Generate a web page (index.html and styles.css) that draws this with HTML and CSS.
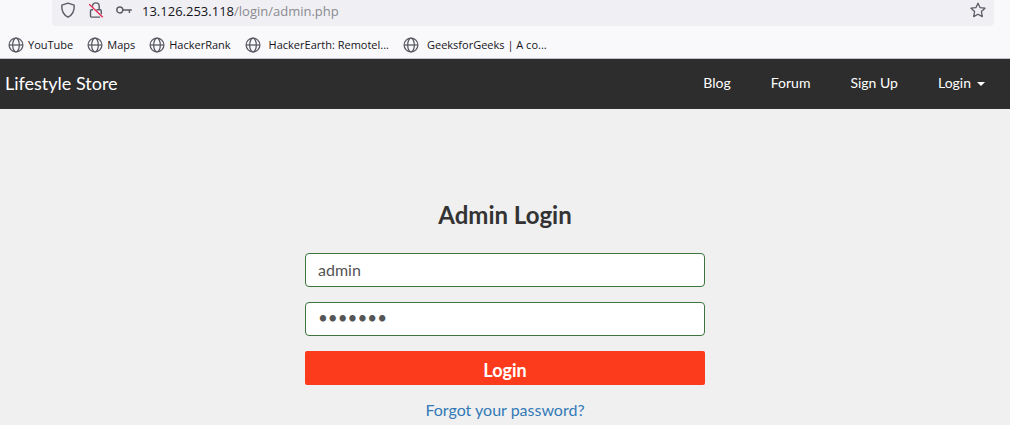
FILE: index.html
```html
<!DOCTYPE html>
<html lang="en">
<head>
<meta charset="utf-8">
<title>Lifestyle Store</title>
<link rel="stylesheet" href="styles.css">
</head>
<body>
<svg class="defs" aria-hidden="true">
  <symbol id="globe" viewBox="0 0 16 16">
    <g fill="none" stroke="#5b5b66" stroke-width="1.3">
      <circle cx="8" cy="8" r="6.9"/>
      <ellipse cx="8" cy="8" rx="3.3" ry="6.9"/>
      <path d="M1.2 8h13.6"/>
    </g>
  </symbol>
</svg>
<div class="browser">
  <div class="address">
    <svg class="icon" viewBox="0 0 16 16" aria-hidden="true"><path d="M8 1.2 14.2 3.2C14.6 9 12.5 12.8 8 15.2 3.5 12.8 1.4 9 1.8 3.2Z" fill="none" stroke="#5b5b66" stroke-width="1.4" stroke-linejoin="round"/></svg>
    <svg class="icon" viewBox="0 0 16 16" aria-hidden="true"><g fill="none" stroke="#5b5b66" stroke-width="1.4"><path d="M4.6 4.6V4.2a3.3 3.3 0 0 1 6.6 0V7.6"/><path d="M5 7.7H3.7a1.2 1.2 0 0 0-1.2 1.2v5a1.2 1.2 0 0 0 1.2 1.2h8.4M8.4 7.7h3.7a1.2 1.2 0 0 1 1.2 1.2v3.4"/></g><path d="M1.2 2.2 14.8 15.2" stroke="#e22850" stroke-width="1.3"/></svg>
    <svg class="icon" viewBox="0 0 16 16" aria-hidden="true"><g fill="none" stroke="#5b5b66" stroke-width="1.4"><circle cx="3.8" cy="8" r="3"/><path d="M6.8 8h9M13.4 8v3"/></g></svg>
    <div class="url" role="textbox" aria-label="Address" contenteditable="true" spellcheck="false"><span class="host">13.126.253.118</span>/login/admin.php</div>
    <button class="star" type="button" aria-label="Bookmark this page"><svg class="icon" viewBox="0 0 16 16" aria-hidden="true"><path d="M8 1.2 10 5.6 15 6.2 11.4 9.5 12.3 14.6 8 12.2 3.7 14.6 4.6 9.5 1 6.2 6 5.6Z" fill="none" stroke="#5b5b66" stroke-width="1.3" stroke-linejoin="round"/></svg></button>
  </div>
  <nav class="bookmarks" aria-label="Bookmarks">
    <a href="#"><svg class="icon" aria-hidden="true"><use href="#globe"/></svg>YouTube</a>
    <a href="#"><svg class="icon" aria-hidden="true"><use href="#globe"/></svg>Maps</a>
    <a href="#"><svg class="icon" aria-hidden="true"><use href="#globe"/></svg>HackerRank</a>
    <a href="#" class="wide"><svg class="icon" aria-hidden="true"><use href="#globe"/></svg>HackerEarth: Remotel...</a>
    <a href="#" class="wide"><svg class="icon" aria-hidden="true"><use href="#globe"/></svg>GeeksforGeeks | A co...</a>
  </nav>
</div>
<header class="navbar">
  <a class="brand" href="#">Lifestyle Store</a>
  <nav class="menu">
    <a href="#">Blog</a>
    <a href="#">Forum</a>
    <a href="#">Sign Up</a>
    <a href="#" class="dropdown">Login<span class="caret"></span></a>
  </nav>
</header>
<main class="login">
  <h1>Admin Login</h1>
  <form class="form">
    <input type="text" value="admin" aria-label="Username">
    <input class="password" type="password" value="adminpw" aria-label="Password">
    <button class="submit" type="submit">Login</button>
    <a class="forgot" href="#">Forgot your password?</a>
  </form>
</main>
</body>
</html>
```
FILE: styles.css
```css
* { box-sizing: border-box; }
body {
  margin: 0;
  background: #f0f0f0;
  color: #333;
  font-family: Lato, sans-serif;
}
a { color: inherit; text-decoration: none; }
.defs { position: absolute; width: 0; height: 0; }
.icon { display: block; width: 16px; height: 16px; flex: none; }

.browser {
  background: #f9f9fb;
  border-bottom: 1px solid #c2c2c8;
  font-family: "Open Sans", "Noto Sans", sans-serif;
}
.address {
  display: flex;
  align-items: center;
  gap: 12px;
  height: 26px;
  margin: 0 16px 0 52px;
  padding: 0 8px 6px;
  border-radius: 0 0 4px 4px;
  background: #f0f0f4;
}
.url { flex: 1; margin-left: -2px; padding-top: 2px; color: #8a8a90; font-size: 13px; line-height: 20px; outline: 0; }
.host { color: #15141a; }
.star { padding: 0; border: 0; background: none; }
.bookmarks {
  display: flex;
  gap: 14px;
  padding: 9px 8px 3px;
  color: #15141a;
  font-size: 11px;
  line-height: 20px;
  white-space: nowrap;
}
.bookmarks a { display: flex; align-items: center; gap: 4px; }
.bookmarks .wide { gap: 8px; }

.navbar {
  display: flex;
  align-items: center;
  justify-content: space-between;
  padding: 0 25px 2px 5px;
  background: #2d2d2d;
  color: #fff;
  line-height: 48px;
}
.brand { font-size: 18px; }
.menu { display: flex; gap: 40px; font-size: 14px; }
.dropdown { display: flex; align-items: center; gap: 6px; }
.caret { margin-top: 2px; border: 4px solid transparent; border-top-color: #fff; border-bottom: 0; }

.login {
  max-width: 400px;
  margin: 0 auto;
  padding-top: 91px;
  text-align: center;
}
h1 { margin: 0 0 23px; font-size: 24px; font-weight: 700; line-height: 30px; }
.form { display: flex; flex-direction: column; gap: 15px; }
.form input {
  width: 100%;
  height: 34px;
  padding: 0 12px 2px;
  border: 1px solid #3c763d;
  border-radius: 4px;
  background: #fff;
  color: #555;
  font: 16px Lato, sans-serif;
}
.form .password { padding-bottom: 4px; font-size: 17px; }
.submit {
  height: 34px;
  padding: 3px 0 0;
  border: 0;
  border-radius: 2px;
  background: #fc3a1c;
  color: #fff;
  font: 700 18px Lato, sans-serif;
}
.forgot { color: #337ab7; font-size: 16px; line-height: 20px; }
```
